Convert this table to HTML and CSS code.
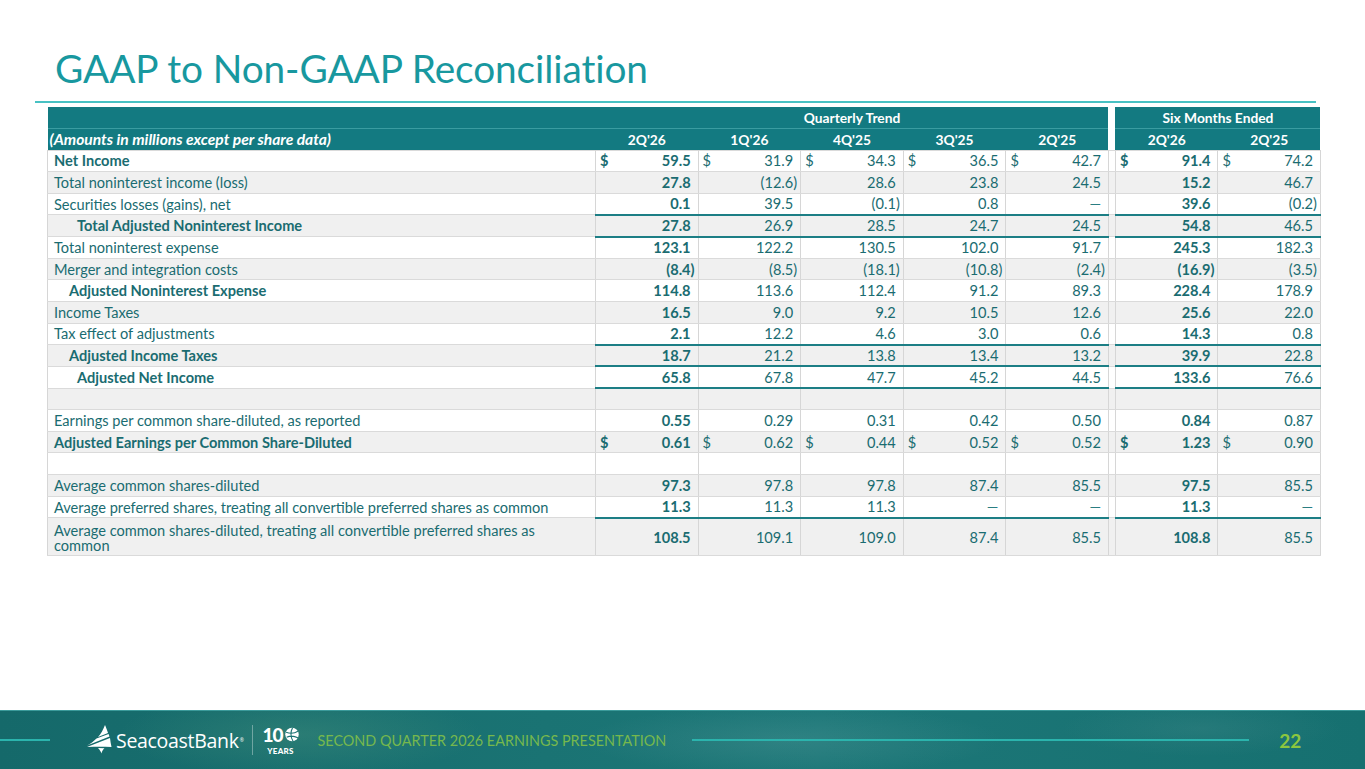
FILE: index.html
```html
<!DOCTYPE html>
<html lang="en">
<head>
<meta charset="utf-8">
<title>GAAP to Non-GAAP Reconciliation</title>
<link rel="stylesheet" href="styles.css">
</head>
<body>
<h1 class="title">GAAP to Non-GAAP Reconciliation</h1>
<div class="rule"></div>
<table class="recon">
  <colgroup>
    <col class="c-label"><col class="c-q"><col class="c-q"><col class="c-q"><col class="c-q"><col class="c-q"><col class="c-gap"><col class="c-s"><col class="c-s">
  </colgroup>
  <thead>
    <tr class="h1">
      <th></th>
      <th colspan="5" class="center">Quarterly Trend</th>
      <th class="gap"></th>
      <th colspan="2" class="center">Six Months Ended</th>
    </tr>
    <tr class="h2">
      <th class="lbl-h">(Amounts in millions except per share data)</th>
      <th class="center">2Q'26</th><th class="center">1Q'26</th><th class="center">4Q'25</th><th class="center">3Q'25</th><th class="center">2Q'25</th>
      <th class="gap"></th>
      <th class="center">2Q'26</th><th class="center">2Q'25</th>
    </tr>
  </thead>
  <tbody>
    <tr class="w">
      <td class="lbl b">Net Income</td>
      <td class="b"><span class="cur">$</span>59.5</td><td><span class="cur">$</span>31.9</td><td><span class="cur">$</span>34.3</td><td><span class="cur">$</span>36.5</td><td><span class="cur">$</span>42.7</td>
      <td class="gap"></td>
      <td class="b"><span class="cur">$</span>91.4</td><td><span class="cur">$</span>74.2</td>
    </tr>
    <tr class="g">
      <td class="lbl">Total noninterest income (loss)</td>
      <td class="b">27.8</td><td><span class="neg">(12.6)</span></td><td>28.6</td><td>23.8</td><td>24.5</td>
      <td class="gap"></td>
      <td class="b">15.2</td><td>46.7</td>
    </tr>
    <tr class="w ul">
      <td class="lbl">Securities losses (gains), net</td>
      <td class="b">0.1</td><td>39.5</td><td><span class="neg">(0.1)</span></td><td>0.8</td><td><span class="dash">—</span></td>
      <td class="gap"></td>
      <td class="b">39.6</td><td><span class="neg">(0.2)</span></td>
    </tr>
    <tr class="g ul">
      <td class="lbl b in2">Total Adjusted Noninterest Income</td>
      <td class="b">27.8</td><td>26.9</td><td>28.5</td><td>24.7</td><td>24.5</td>
      <td class="gap"></td>
      <td class="b">54.8</td><td>46.5</td>
    </tr>
    <tr class="w">
      <td class="lbl">Total noninterest expense</td>
      <td class="b">123.1</td><td>122.2</td><td>130.5</td><td>102.0</td><td>91.7</td>
      <td class="gap"></td>
      <td class="b">245.3</td><td>182.3</td>
    </tr>
    <tr class="g">
      <td class="lbl">Merger and integration costs</td>
      <td class="b"><span class="neg">(8.4)</span></td><td><span class="neg">(8.5)</span></td><td><span class="neg">(18.1)</span></td><td><span class="neg">(10.8)</span></td><td><span class="neg">(2.4)</span></td>
      <td class="gap"></td>
      <td class="b"><span class="neg">(16.9)</span></td><td><span class="neg">(3.5)</span></td>
    </tr>
    <tr class="w">
      <td class="lbl b in1">Adjusted Noninterest Expense</td>
      <td class="b">114.8</td><td>113.6</td><td>112.4</td><td>91.2</td><td>89.3</td>
      <td class="gap"></td>
      <td class="b">228.4</td><td>178.9</td>
    </tr>
    <tr class="g">
      <td class="lbl">Income Taxes</td>
      <td class="b">16.5</td><td>9.0</td><td>9.2</td><td>10.5</td><td>12.6</td>
      <td class="gap"></td>
      <td class="b">25.6</td><td>22.0</td>
    </tr>
    <tr class="w ul">
      <td class="lbl">Tax effect of adjustments</td>
      <td class="b">2.1</td><td>12.2</td><td>4.6</td><td>3.0</td><td>0.6</td>
      <td class="gap"></td>
      <td class="b">14.3</td><td>0.8</td>
    </tr>
    <tr class="g ul">
      <td class="lbl b in1">Adjusted Income Taxes</td>
      <td class="b">18.7</td><td>21.2</td><td>13.8</td><td>13.4</td><td>13.2</td>
      <td class="gap"></td>
      <td class="b">39.9</td><td>22.8</td>
    </tr>
    <tr class="w ul">
      <td class="lbl b in2">Adjusted Net Income</td>
      <td class="b">65.8</td><td>67.8</td><td>47.7</td><td>45.2</td><td>44.5</td>
      <td class="gap"></td>
      <td class="b">133.6</td><td>76.6</td>
    </tr>
    <tr class="g">
      <td class="lbl"></td>
      <td></td><td></td><td></td><td></td><td></td>
      <td class="gap"></td>
      <td></td><td></td>
    </tr>
    <tr class="w">
      <td class="lbl">Earnings per common share-diluted, as reported</td>
      <td class="b">0.55</td><td>0.29</td><td>0.31</td><td>0.42</td><td>0.50</td>
      <td class="gap"></td>
      <td class="b">0.84</td><td>0.87</td>
    </tr>
    <tr class="g">
      <td class="lbl b">Adjusted Earnings per Common Share-Diluted</td>
      <td class="b"><span class="cur">$</span>0.61</td><td><span class="cur">$</span>0.62</td><td><span class="cur">$</span>0.44</td><td><span class="cur">$</span>0.52</td><td><span class="cur">$</span>0.52</td>
      <td class="gap"></td>
      <td class="b"><span class="cur">$</span>1.23</td><td><span class="cur">$</span>0.90</td>
    </tr>
    <tr class="w">
      <td class="lbl"></td>
      <td></td><td></td><td></td><td></td><td></td>
      <td class="gap"></td>
      <td></td><td></td>
    </tr>
    <tr class="g">
      <td class="lbl">Average common shares-diluted</td>
      <td class="b">97.3</td><td>97.8</td><td>97.8</td><td>87.4</td><td>85.5</td>
      <td class="gap"></td>
      <td class="b">97.5</td><td>85.5</td>
    </tr>
    <tr class="w ul">
      <td class="lbl">Average preferred shares, treating all convertible preferred shares as common</td>
      <td class="b">11.3</td><td>11.3</td><td>11.3</td><td><span class="dash">—</span></td><td><span class="dash">—</span></td>
      <td class="gap"></td>
      <td class="b">11.3</td><td><span class="dash">—</span></td>
    </tr>
    <tr class="g tall">
      <td class="lbl">Average common shares-diluted, treating all convertible preferred shares as<br>common</td>
      <td class="b">108.5</td><td>109.1</td><td>109.0</td><td>87.4</td><td>85.5</td>
      <td class="gap"></td>
      <td class="b">108.8</td><td>85.5</td>
    </tr>
  </tbody>
</table>

<footer class="footer">
  <div class="fline fline-left"></div>
  <svg class="sail" width="28" height="30" viewBox="0 0 28 30" aria-hidden="true">
    <path d="M19 1 C17 6 15 10 12 13 L22 9 C21 6 20 3 19 1 Z" fill="#fff"/>
    <path d="M10.5 14.5 C8 17 5 19.5 1 21.5 L23.5 12.5 C23.2 11.6 22.9 10.8 22.6 10 Z" fill="#fff"/>
    <path d="M1 23 L24 14 C24.4 17 24.8 20 25.5 23 C17 22.5 9 22.6 1 23 Z" fill="#fff"/>
    <path d="M12 24 C14 26 15 28 15.5 29.5 C16 27 17 25.5 18.5 24.2 Z" fill="#fff"/>
  </svg>
  <div class="brand">SeacoastBank<span class="reg">®</span></div>
  <div class="vsep"></div>
  <div class="years">
    <div class="num">10<svg class="ball" width="14" height="15" viewBox="0 0 13 14" aria-hidden="true"><circle cx="6.5" cy="7" r="6.3" fill="#fff"/><path d="M1 5 C4 6 9 6 12 4 M1.5 9.5 C5 8 9 8.5 12 10 M7 0.8 C5 4 5 10 7.5 13.3" stroke="#1b7272" stroke-width="1" fill="none"/></svg></div>
    <div class="yr">YEARS</div>
  </div>
  <div class="ftext">SECOND QUARTER 2026 EARNINGS PRESENTATION</div>
  <div class="fline fline-mid"></div>
  <div class="page">22</div>
</footer>
</body>
</html>
```

FILE: styles.css
```css
* { box-sizing: border-box; }

html, body {
  margin: 0;
  padding: 0;
}

body {
  width: 1365px;
  height: 769px;
  overflow: hidden;
  background: #ffffff;
  font-family: "Lato", "Open Sans", "DejaVu Sans", sans-serif;
  display: flex;
  flex-direction: column;
}

.title {
  margin: 0;
  padding: 45px 0 0 55px;
  font-size: 38.8px;
  line-height: 46px;
  font-weight: 400;
  color: #18989f;
  letter-spacing: -0.1px;
}

.rule {
  margin: 10px 49px 0 35px;
  height: 2px;
  background: #48c1c3;
}

.recon {
  margin: 4px 0 0 47px;
  width: 1273px;
  table-layout: fixed;
  border-collapse: collapse;
  font-size: 14.6px;
  line-height: 15px;
  color: #1a6c71;
}

.c-label { width: 548px; }
.c-q { width: 102.6px; }
.c-gap { width: 7px; }
.c-s { width: 102.5px; }

.recon th {
  background: #137a81;
  color: #ffffff;
  font-weight: 700;
  font-size: 13.8px;
  padding: 0 6px;
  white-space: nowrap;
}

.recon th.center { text-align: center; }

.recon .h1 th { height: 21px; }
.recon .h2 th {
  height: 22px;
  border-top: 1px solid #3a9ca1;
}

.recon th.lbl-h {
  text-align: left;
  font-style: italic;
  font-size: 15.6px;
  padding-left: 2px;
}

.recon th.gap {
  background: #ffffff;
  border-top: none;
  padding: 0;
}

.recon td {
  height: 21.65px;
  padding: 0 7px 0 4px;
  text-align: right;
  white-space: nowrap;
  border-top: 1px solid #dadada;
  border-bottom: 1px solid #dadada;
  border-left: 1px solid #d6d6d6;
  border-right: 1px solid #d6d6d6;
}

.recon tr.g td { background: #f0f0f0; }
.recon tr.w td { background: #ffffff; }

.recon td.lbl {
  text-align: left;
  padding-left: 6px;
  white-space: normal;
}

.recon td.in1 { padding-left: 21px; }
.recon td.in2 { padding-left: 29px; }

.recon td.b { font-weight: 700; }

.recon td.gap {
  padding: 0;
  border-left: none;
  border-right: none;
}

.recon tr.ul td:not(.lbl):not(.gap) {
  border-bottom: 2px solid #1c7e85;
}

.recon tr.tall td { height: 38px; }
.recon tr.tall td.lbl { padding-top: 2px; }

.cur { float: left; }

.neg { margin-right: -4px; }

.dash { color: #2a7e82; }

/* footer */
.footer {
  margin-top: auto;
  height: 59px;
  display: flex;
  align-items: center;
  border-top: 1px solid #3b9a9a;
  background:
    radial-gradient(ellipse 260px 60px at 22% 40%, rgba(90, 160, 130, 0.28), transparent 70%),
    radial-gradient(ellipse 300px 50px at 58% 50%, rgba(110, 170, 170, 0.22), transparent 70%),
    radial-gradient(ellipse 200px 40px at 88% 30%, rgba(90, 150, 150, 0.2), transparent 70%),
    linear-gradient(90deg, #15696a 0%, #1a7373 40%, #1d7778 60%, #167070 100%);
}

.fline {
  height: 2px;
  background: #2bb4ad;
}

.fline-left {
  width: 50px;
  margin-right: 36px;
}

.sail {
  display: block;
  margin-top: -2px;
}

.brand {
  margin-left: 2px;
  color: #ffffff;
  font-family: "Open Sans", "Lato", sans-serif;
  font-size: 19.5px;
  letter-spacing: -0.3px;
  line-height: 20px;
}

.reg {
  font-size: 5px;
  vertical-align: 6px;
  margin-left: 1px;
}

.vsep {
  width: 1px;
  height: 30px;
  margin-left: 8px;
  background: rgba(255, 255, 255, 0.35);
}

.years {
  margin-left: 10px;
  color: #ffffff;
  display: flex;
  flex-direction: column;
  align-items: center;
  width: 36px;
}

.years .num {
  display: flex;
  align-items: center;
  font-weight: 900;
  font-size: 19px;
  line-height: 18px;
  height: 18px;
  letter-spacing: -1px;
}

.years .ball {
  display: block;
  margin-left: 2px;
}

.years .yr {
  margin-top: 3px;
  font-weight: 900;
  font-size: 8px;
  line-height: 8px;
  letter-spacing: 0.3px;
}

.ftext {
  margin-left: 19px;
  color: #76b84d;
  font-size: 14.4px;
  font-weight: 400;
  letter-spacing: 0px;
  white-space: nowrap;
}

.fline-mid {
  width: 557px;
  margin-left: 26px;
}

.page {
  margin-left: 30px;
  color: #8cc63f;
  font-weight: 700;
  font-size: 19px;
}
```
